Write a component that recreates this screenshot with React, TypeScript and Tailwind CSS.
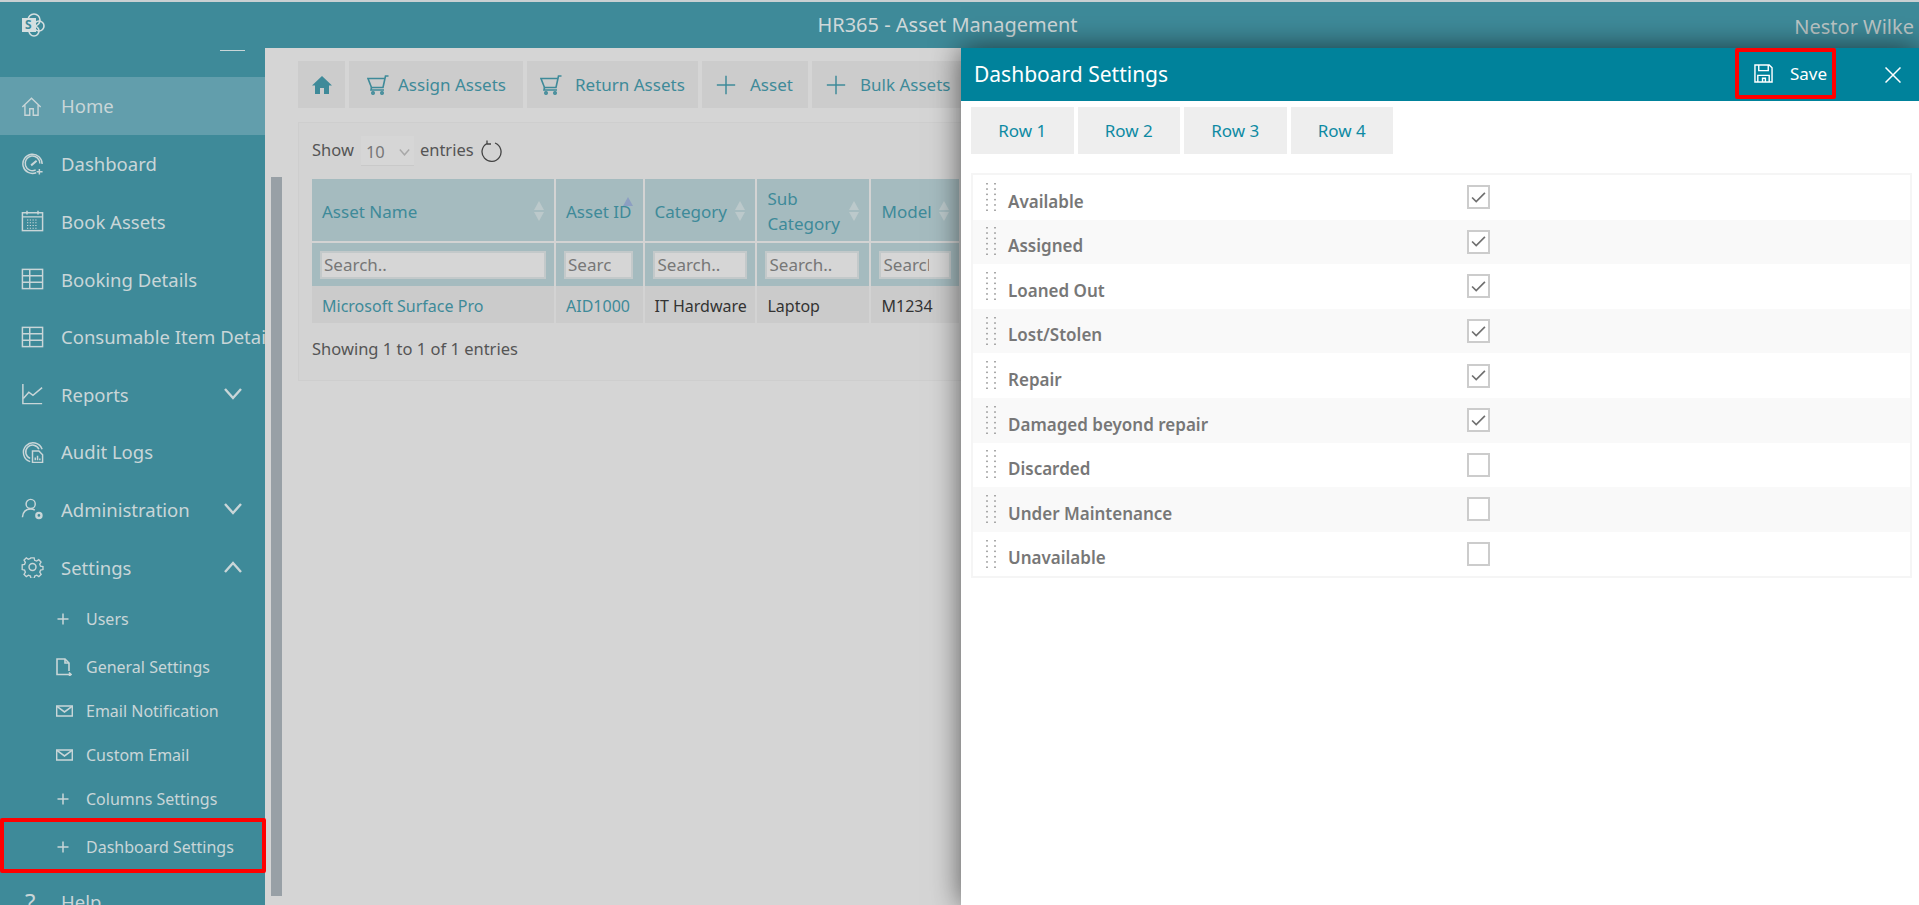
import React from 'react';

type IconProps = { className?: string };

const Svg = ({ className, children, vb = '0 0 24 24', sw = 1.6 }: IconProps & { children: React.ReactNode; vb?: string; sw?: number }) => (
  <svg viewBox={vb} fill="none" stroke="currentColor" strokeWidth={sw} className={className}>
    {children}
  </svg>
);

const HomeIcon = (p: IconProps) => (
  <Svg {...p}>
    <path d="M1.5 12.5 12 2.5l10.5 10M4.5 10.5V22h5.5v-7.5h4V22h5.5V10.5" />
  </Svg>
);
const GaugeIcon = (p: IconProps) => (
  <Svg {...p}>
    <path d="M16 21.5A10.5 10.5 0 1 1 22.5 12" />
    <path d="M15.5 18.5A8 8 0 1 1 20 11.5" />
    <path d="m10.5 13.5 6-5" strokeWidth={2.2} />
    <path d="M19.5 17.5v6M16.5 20.5h6.500" />
  </Svg>
);
const CalendarIcon = (p: IconProps) => (
  <Svg {...p}>
    <rect x="1" y="3" width="22" height="19.5" />
    <path d="M1 7.5h22M6 .8v4M18 .8v4" />
    <path d="M6 11h12M6 14h12M6 17h12M6 20h12" strokeWidth={1.1} strokeDasharray="1.4 1.6" />
  </Svg>
);
const TableIcon = (p: IconProps) => (
  <Svg {...p}>
    <rect x="1" y="1.5" width="22" height="21" />
    <path d="M1 8.5h22M1 15.5h22M9 1.5v21" />
  </Svg>
);
const ChartIcon = (p: IconProps) => (
  <Svg {...p}>
    <path d="M1.5 1v21.5h21" />
    <path d="m2 17 6-7 4.500 3.500L22.500 5" />
  </Svg>
);
const AuditIcon = (p: IconProps) => (
  <Svg {...p}>
    <path d="M9.500 22.500A10.500 10.500 0 1 1 22.500 9" />
    <path d="M9.500 19A7.500 7.500 0 1 1 19 9" />
    <path d="M12 11h7l4 4v8.500H12z" fill="#3e8a99" />
    <path d="M15 21v-3M17.500 21v-5M20 21v-2" strokeWidth={1.6} />
  </Svg>
);
const AdminIcon = (p: IconProps) => (
  <Svg {...p}>
    <circle cx="10" cy="6.500" r="5" />
    <path d="M1 21c.5-6 4-9 9-9 2 0 3.500.5 4.500 1.200" />
    <circle cx="19" cy="19" r="2.800" strokeWidth={2.600} />
  </Svg>
);
const GearIcon = (p: IconProps) => (
  <Svg {...p}>
    <circle cx="12" cy="12" r="3.800" />
    <path d="M10 1.500h4l.6 3 2.400 1 2.600-1.700 2.800 2.800-1.700 2.600 1 2.400 3 .6v3.600l-2.900.7-1 2.400 1.700 2.600-2.800 2.800-2.600-1.700-2.400 1-.6 2.800h-4l-.6-2.800-2.400-1-2.600 1.700-2.800-2.800 1.700-2.600-1-2.400-2.900-.7V10l2.900-.6 1-2.400-1.700-2.600 2.800-2.800L7 3.300l2.400-1z" transform="translate(1.200 .6) scale(.9)" />
  </Svg>
);
const PlusIcon = (p: IconProps) => (
  <Svg {...p}>
    <path d="M12 2v20M2 12h20" />
  </Svg>
);
const SmallPlusIcon = (p: IconProps) => (
  <Svg {...p} sw={3}>
    <path d="M12 1v22M1 12h22" />
  </Svg>
);
const FileIcon = (p: IconProps) => (
  <Svg {...p} vb="0 0 16 18">
    <path d="M9 16.500H1V1h8l4 4v8" />
    <path d="M9 1v4h4M9 16.500h6m-2-2 2 2-2 1.500" />
  </Svg>
);
const MailIcon = (p: IconProps) => (
  <Svg {...p} vb="0 0 18 12">
    <rect x=".7" y=".7" width="16.600" height="10.600" />
    <path d="m1 1 8 6 8-6" />
  </Svg>
);
const Chevron = ({ up, className }: IconProps & { up?: boolean }) => (
  <svg viewBox="0 0 18 12" fill="none" stroke="currentColor" strokeWidth={2.400} className={className}>
    <path d={up ? 'M1 11 9 2l8 9' : 'M1 1l8 9 8-9'} />
  </svg>
);
const CartIcon = (p: IconProps) => (
  <Svg {...p} vb="0 0 22 20">
    <path d="M21.500 1h-3L16 12.500H4.500L1 3.500h17" />
    <path d="M4.500 12.500 4 15h13" />
    <circle cx="6" cy="18" r="1.200" />
    <circle cx="15" cy="18" r="1.200" />
  </Svg>
);
const Sort = ({ active }: { active?: boolean }) => (
  <span className="flex flex-col gap-[2px]">
    <span className={`h-0 w-0 border-x-[5px] border-b-[9px] border-x-transparent ${active ? 'border-b-[#8d9fc2]' : 'border-b-[#bcc9cb]'}`} />
    {!active && <span className="h-0 w-0 border-x-[5px] border-t-[9px] border-x-transparent border-t-[#bcc9cb]" />}
  </span>
);
const Handle = () => (
  <svg viewBox="0 0 10 29" className="h-[29px] w-[10px] text-[#a9a9a9]" fill="currentColor">
    {[0, 1, 2, 3, 4, 5].map((r) => (
      <g key={r}>
        <rect x="0" y={r * 5.3} width="2" height="1.500" />
        <rect x="8" y={r * 5.3} width="2" height="1.500" />
      </g>
    ))}
  </svg>
);

const mainMenu = [
  { label: 'Dashboard', icon: GaugeIcon },
  { label: 'Book Assets', icon: CalendarIcon },
  { label: 'Booking Details', icon: TableIcon },
  { label: 'Consumable Item Details', icon: TableIcon },
  { label: 'Reports', icon: ChartIcon, chevron: 'down' },
  { label: 'Audit Logs', icon: AuditIcon },
  { label: 'Administration', icon: AdminIcon, chevron: 'down' },
  { label: 'Settings', icon: GearIcon, chevron: 'up' },
];

const subMenu = [
  { label: 'Users', icon: SmallPlusIcon, box: 'h-[46px]', iconCls: 'h-3 w-3 ml-px' },
  { label: 'General Settings', icon: FileIcon, box: 'h-[47px] pt-[3px]', iconCls: 'h-[18px] w-4' },
  { label: 'Email Notification', icon: MailIcon, box: 'h-[44px]', iconCls: 'h-3 w-[17px]' },
  { label: 'Custom Email', icon: MailIcon, box: 'h-[44px]', iconCls: 'h-3 w-[17px]' },
  { label: 'Columns Settings', icon: SmallPlusIcon, box: 'h-[41px] pt-[3px]', iconCls: 'h-3 w-3 ml-px' },
];

const rows = [
  { label: 'Available', on: true },
  { label: 'Assigned', on: true },
  { label: 'Loaned Out', on: true },
  { label: 'Lost/Stolen', on: true },
  { label: 'Repair', on: true },
  { label: 'Damaged beyond repair', on: true },
  { label: 'Discarded', on: false },
  { label: 'Under Maintenance', on: false },
  { label: 'Unavailable', on: false },
];

const columns = [
  { title: 'Asset Name', w: 'w-[243px]', cell: 'px-[10px]', input: 'w-[226px]' },
  { title: 'Asset ID', w: 'w-[87px]', cell: 'px-[10px]', input: 'w-[69px]', active: true },
  { title: 'Category', w: 'w-[112px]', cell: 'pl-[9px] pr-[10px]', input: 'w-[94px]' },
  { title: 'Sub Category', w: 'w-[114px]', cell: 'px-[10px]', input: 'w-[94px]' },
  { title: 'Model', w: 'w-[90px]', cell: 'px-[10px]', input: 'w-[72px]' },
  { title: 'Status', w: 'w-[120px]', cell: 'px-[10px]', input: 'w-[90px]' },
];

const toolbar = [
  { label: 'Assign Assets', icon: CartIcon, box: 'w-[174px] pl-[18px] gap-[9px]', iconCls: 'h-[20px] w-[22px]' },
  { label: 'Return Assets', icon: CartIcon, box: 'w-[171px] pl-[13px] gap-[13px]', iconCls: 'h-[20px] w-[22px]' },
  { label: 'Asset', icon: PlusIcon, box: 'w-[106px] pl-[13px] gap-[13px]', iconCls: 'h-[22px] w-[22px]' },
  { label: 'Bulk Assets', icon: PlusIcon, box: 'w-[150px] pl-[13px] gap-[13px]', iconCls: 'h-[22px] w-[22px]' },
];

const Sidebar = () => (
  <aside className="w-[265px] shrink-0 bg-[#3e8a99] text-[18.500px] text-[#c9d6d8]">
    <div className="h-[29px] pt-[2px]">
      <div className="ml-[220px] h-px w-[25px] bg-[#c9d6d8]" />
    </div>
    <div className="flex h-[58px] items-center gap-[19px] bg-[#629eac] pl-[21px]">
      <HomeIcon className="h-[21px] w-[21px]" />
      <span>Home</span>
    </div>
    {mainMenu.map((m) => {
      const Icon = m.icon;
      return (
        <div key={m.label} className="flex h-[57.6px] items-center pl-[21px]">
          <Icon className="h-[22px] w-[23px] shrink-0" />
          <span className="ml-[17px] overflow-hidden whitespace-nowrap pt-px">{m.label}</span>
          {m.chevron && <Chevron up={m.chevron === 'up'} className="ml-auto mr-[23px] h-3 w-[18px] shrink-0" />}
        </div>
      );
    })}
    <div className="text-[16px]">
      {subMenu.map((s) => {
        const Icon = s.icon;
        return (
          <div key={s.label} className={`flex items-center pl-[56px] ${s.box}`}>
            <span className="flex w-[30px] shrink-0">
              <Icon className={s.iconCls} />
            </span>
            <span>{s.label}</span>
          </div>
        );
      })}
      <div className="relative flex h-[55px] items-center pl-[56px] pt-1">
        <span className="flex w-[30px] shrink-0">
          <SmallPlusIcon className="ml-px h-3 w-3" />
        </span>
        <span>Dashboard Settings</span>
        <span className="absolute inset-0 -right-px rounded-[2px] border-[4px] border-[#ff0000]" />
      </div>
    </div>
    <div className="flex h-[58px] items-center pl-[21px]">
      <span className="w-[40px] pl-1 text-[24px] leading-none">?</span>
      <span>Help</span>
    </div>
  </aside>
);

const MainContent = () => (
  <main className="min-w-0 flex-1 overflow-hidden bg-[#d5d5d5] pl-[16px] pt-[13px] text-[16.500px]">
    <div className="flex gap-1">
      <div className="flex h-[47px] w-[47px] shrink-0 items-center justify-center bg-[#cccccc] text-[#3e8a99]">
        <svg viewBox="0 0 20 18" className="h-[18px] w-5" fill="currentColor">
          <path d="M10 0 0 9.500h3V18h5v-6h4v6h5V9.500h3z" />
        </svg>
      </div>
      {toolbar.map((t) => {
        const Icon = t.icon;
        return (
          <div key={t.label} className={`flex h-[47px] shrink-0 items-center bg-[#cccccc] text-[17px] text-[#3e8a99] ${t.box}`}>
            <Icon className={t.iconCls} />
            <span>{t.label}</span>
          </div>
        );
      })}
    </div>
    <div className="mt-[14px] h-[259px] w-[1100px] border border-[#cecece] bg-[#d3d3d3] pl-[13px]">
      <div className="flex h-[56px] items-center text-[#555]">
        <span className="-mt-px">Show</span>
        <span className="ml-[7px] flex h-[30px] w-[53px] items-center justify-between border-b border-[#c9c9c9] bg-[#d6d6d6] pl-[5px] pr-[3px] pt-1 text-[#777]">
          10
          <Chevron className="h-[7px] w-[13px] text-[#a8a8a8]" />
        </span>
        <span className="ml-[6px] -mt-px">entries</span>
        <svg viewBox="0 0 22 22" className="ml-[6px] h-[22px] w-[22px] text-[#444]" fill="none" stroke="currentColor" strokeWidth={1.300}>
          <path d="M7 3.500A9.500 9.500 0 1 0 15 3M7 .5v3.500h4" />
        </svg>
      </div>
      <table className="table-fixed border-collapse">
        <thead>
          <tr className="h-[63px] bg-[#a5bbbf] text-[17px] text-[#3e8a99]">
            {columns.map((c) => (
              <th key={c.title} className={`border-r-2 border-[#d3d3d3] pt-[2px] text-left font-normal ${c.cell} ${c.w}`}>
                <div className="flex items-center justify-between leading-[25px]">
                  <span className={c.title === 'Sub Category' ? 'w-[60px]' : 'whitespace-nowrap'}>{c.title}</span>
                  <span className={c.active ? '-ml-2 -mt-5' : ''}>
                    <Sort active={c.active} />
                  </span>
                </div>
              </th>
            ))}
          </tr>
          <tr className="h-[44px] border-t-2 border-[#d3d3d3] bg-[#a5bbbf]">
            {columns.map((c) => (
              <th key={c.title} className="border-r-2 border-[#d3d3d3] px-[8px] text-left font-normal">
                <input
                  readOnly
                  placeholder="Search.."
                  className={`h-[28px] border-2 border-[#c3c9ca] bg-[#d6d6d6] pl-[2px] pr-[20px] text-[17px] placeholder:text-[#777] ${c.input}`}
                />
              </th>
            ))}
          </tr>
        </thead>
        <tbody>
          <tr className="h-[37px] bg-[#cbcbcb] text-[16px]">
            <td className="border-r-2 border-[#d3d3d3] px-[10px] pt-[2px] text-[#3e8a99]">Microsoft Surface Pro</td>
            <td className="border-r-2 border-[#d3d3d3] px-[10px] pt-[2px] text-[#3e8a99]">AID1000</td>
            <td className="border-r-2 border-[#d3d3d3] pl-[9px] pt-[2px] whitespace-nowrap text-[#333]">IT Hardware</td>
            <td className="border-r-2 border-[#d3d3d3] px-[10px] pt-[2px] text-[#333]">Laptop</td>
            <td className="border-r-2 border-[#d3d3d3] px-[10px] pt-[2px] text-[#333]">M1234</td>
            <td />
          </tr>
        </tbody>
      </table>
      <div className="mt-[14px] text-[#555]">Showing 1 to 1 of 1 entries</div>
    </div>
  </main>
);

const SettingsPanel = () => (
  <section className="absolute bottom-0 left-[961px] right-0 top-[48px] bg-white shadow-[0_0_28px_rgba(0,0,0,0.6)]">
    <div className="flex h-[53px] items-center bg-[#00829b] pl-[13px] text-white">
      <h2 className="text-[21px]">Dashboard Settings</h2>
      <div className="ml-auto flex h-[51px] w-[101px] -translate-y-px items-center rounded-[2px] border-[4px] border-[#ff0000] pl-[15px] text-[17px]">
        <svg viewBox="0 0 20 20" className="h-[19px] w-[19px]" fill="none" stroke="currentColor" strokeWidth={1.500}>
          <path d="M1 1h15l3 3v15H1zM5 1v6h10V1M4 19v-7h12v7M9 19v-4h3v4" />
        </svg>
        <span className="ml-[17px]">Save</span>
      </div>
      <svg viewBox="0 0 16 16" className="ml-[49px] mr-[18px] h-4 w-4" fill="none" stroke="currentColor" strokeWidth={1.500}>
        <path d="m.5.5 15 15M15.500.5l-15 15" />
      </svg>
    </div>
    <div className="flex gap-1 pl-[10px] pt-[6px] text-[17px] text-[#0d8aa3]">
      {['Row 1', 'Row 2', 'Row 3', 'Row 4'].map((r) => (
        <div key={r} className="flex h-[47px] w-[102.500px] items-center justify-center bg-[#eeeeee]">
          {r}
        </div>
      ))}
    </div>
    <div className="ml-[10px] mr-[7px] mt-[19px] border-2 border-[#f5f5f5]">
      {rows.map((r, i) => (
        <div key={r.label} className={`flex h-[44.600px] items-center pl-[13px] ${i % 2 === 1 ? 'bg-[#f9f9f9]' : 'bg-white'}`}>
          <Handle />
          <span className="ml-[12px] w-[459px] pt-[8px] text-[17px] font-semibold text-[#777]">{r.label}</span>
          <span className="flex h-[24px] w-[23px] items-center justify-center border-2 border-[#cccccc] bg-white">
            {r.on && (
              <svg viewBox="0 0 16 12" className="h-[11px] w-[15px] text-[#6f6f6f]" fill="none" stroke="currentColor" strokeWidth={1.800}>
                <path d="m1 6 4.500 4.500L15 1" />
              </svg>
            )}
          </span>
        </div>
      ))}
    </div>
  </section>
);

export default function App() {
  return (
    <div className="relative flex h-[905px] flex-col overflow-hidden bg-[#d5d5d5]" style={{ fontFamily: '"Noto Sans", "Liberation Sans", sans-serif' }}>
      <header className="relative flex h-[48px] shrink-0 items-center border-t-2 border-[#c9d0d2] bg-[#3e8a99] text-[#cfd8d9]">
        <svg viewBox="0 0 24 24" className="absolute left-[21px] top-[11px] h-[24px] w-[24px]">
          <circle cx="13" cy="7" r="6" fill="none" stroke="#d5dfe0" strokeWidth="1.600" />
          <circle cx="18" cy="13" r="5" fill="none" stroke="#d5dfe0" strokeWidth="1.600" />
          <circle cx="13" cy="18" r="5" fill="none" stroke="#d5dfe0" strokeWidth="1.600" />
          <rect x="1" y="5" width="14" height="14" fill="#d5dfe0" />
          <text x="4" y="16" fontSize="12" fontWeight="700" fill="#3e8a99">S</text>
        </svg>
        <div className="flex-1 pr-[24px] text-center text-[20px]">HR365 - Asset Management</div>
        <div className="absolute right-[5px] top-[10px] text-[20px] text-[#bcc6c6]">Nestor Wilke</div>
      </header>
      <div className="flex min-h-0 flex-1">
        <Sidebar />
        <div className="mt-0 w-[17px] shrink-0 bg-[#d5d5d5] pl-[6px] pt-[129px]">
          <div className="h-[719px] w-[11px] bg-[#98a0a6]" />
        </div>
        <MainContent />
      </div>
      <SettingsPanel />
    </div>
  );
}
